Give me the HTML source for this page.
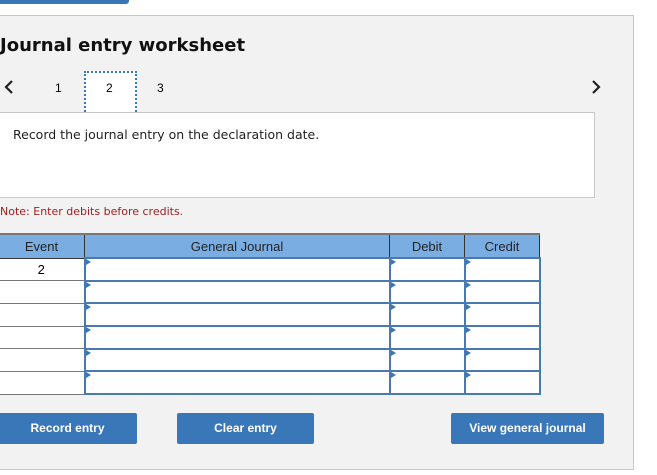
<!DOCTYPE html><html><head><style>
body{margin:0;width:657px;height:475px;background:#fff;position:relative;overflow:hidden;font-family:"DejaVu Sans","Liberation Sans",sans-serif}
.a{position:absolute}
.panel{left:-2px;top:15px;width:634px;height:453px;background:#f2f2f2;border:1px solid #c8c8c8}
.btn{background:#3a77b9;color:#fff;font:bold 12px "Liberation Sans",sans-serif;text-align:center;line-height:31px;height:31px;border-radius:2px;top:413px}
table{border-collapse:collapse;position:absolute;left:-2px;top:233px;font-family:"Liberation Sans",sans-serif;font-size:13px}
th{background:#7aaee3;color:#222;font-weight:normal;height:22px;border:1px solid #333;border-top:2px solid #777;padding:0}
td{height:20.7px;padding:0;background:#fff;border:1px solid #777}
td.i{border:2px solid #4a78b0;position:relative}
td.i:before{content:"";position:absolute;left:0;top:0;border-left:5px solid #3a77b9;border-top:3px solid transparent;border-bottom:3px solid transparent}
</style></head><body>
<div class="a" style="left:0;top:0;width:129px;height:4px;background:#3a77b9;border-radius:0 0 3px 0"></div>
<div class="a panel"></div>
<div class="a" style="left:0;top:35px;font-weight:bold;font-size:18px;color:#111">Journal entry worksheet</div>
<svg class="a" style="left:3px;top:79px" width="12" height="16"><path d="M9 2L3 8L9 14" fill="none" stroke="#222" stroke-width="2.2"/></svg>
<svg class="a" style="left:590px;top:79px" width="12" height="16"><path d="M3 2L9 8L3 14" fill="none" stroke="#222" stroke-width="2.2"/></svg>
<div class="a" style="left:55px;top:81px;font-size:12px;font-family:'Liberation Sans'">1</div>
<div class="a" style="left:84px;top:71px;width:49px;height:42px;background:#fff;border:2px dotted #3a77b9;border-bottom:none"></div>
<div class="a" style="left:106px;top:81px;font-size:12px;font-family:'Liberation Sans'">2</div>
<div class="a" style="left:157px;top:81px;font-size:12px;font-family:'Liberation Sans'">3</div>
<div class="a" style="left:-2px;top:112px;width:595px;height:84px;background:#fff;border:1px solid #c8c8c8"></div>
<div class="a" style="left:13px;top:127px;font-size:12.5px;color:#222">Record the journal entry on the declaration date.</div>
<div class="a" style="left:0;top:205px;font-size:11px;color:#a02020">Note: Enter debits before credits.</div>
<table>
<tr><th style="width:85px">Event</th><th style="width:304px">General Journal</th><th style="width:74px">Debit</th><th style="width:74px">Credit</th></tr>
<tr><td style="text-align:center">2</td><td class="i"></td><td class="i"></td><td class="i"></td></tr>
<tr><td></td><td class="i"></td><td class="i"></td><td class="i"></td></tr>
<tr><td></td><td class="i"></td><td class="i"></td><td class="i"></td></tr>
<tr><td></td><td class="i"></td><td class="i"></td><td class="i"></td></tr>
<tr><td></td><td class="i"></td><td class="i"></td><td class="i"></td></tr>
<tr><td></td><td class="i"></td><td class="i"></td><td class="i"></td></tr>
</table>
<div class="a btn" style="left:-2px;width:139px">Record entry</div>
<div class="a btn" style="left:177px;width:137px">Clear entry</div>
<div class="a btn" style="left:451px;width:153px">View general journal</div>
</body></html>
